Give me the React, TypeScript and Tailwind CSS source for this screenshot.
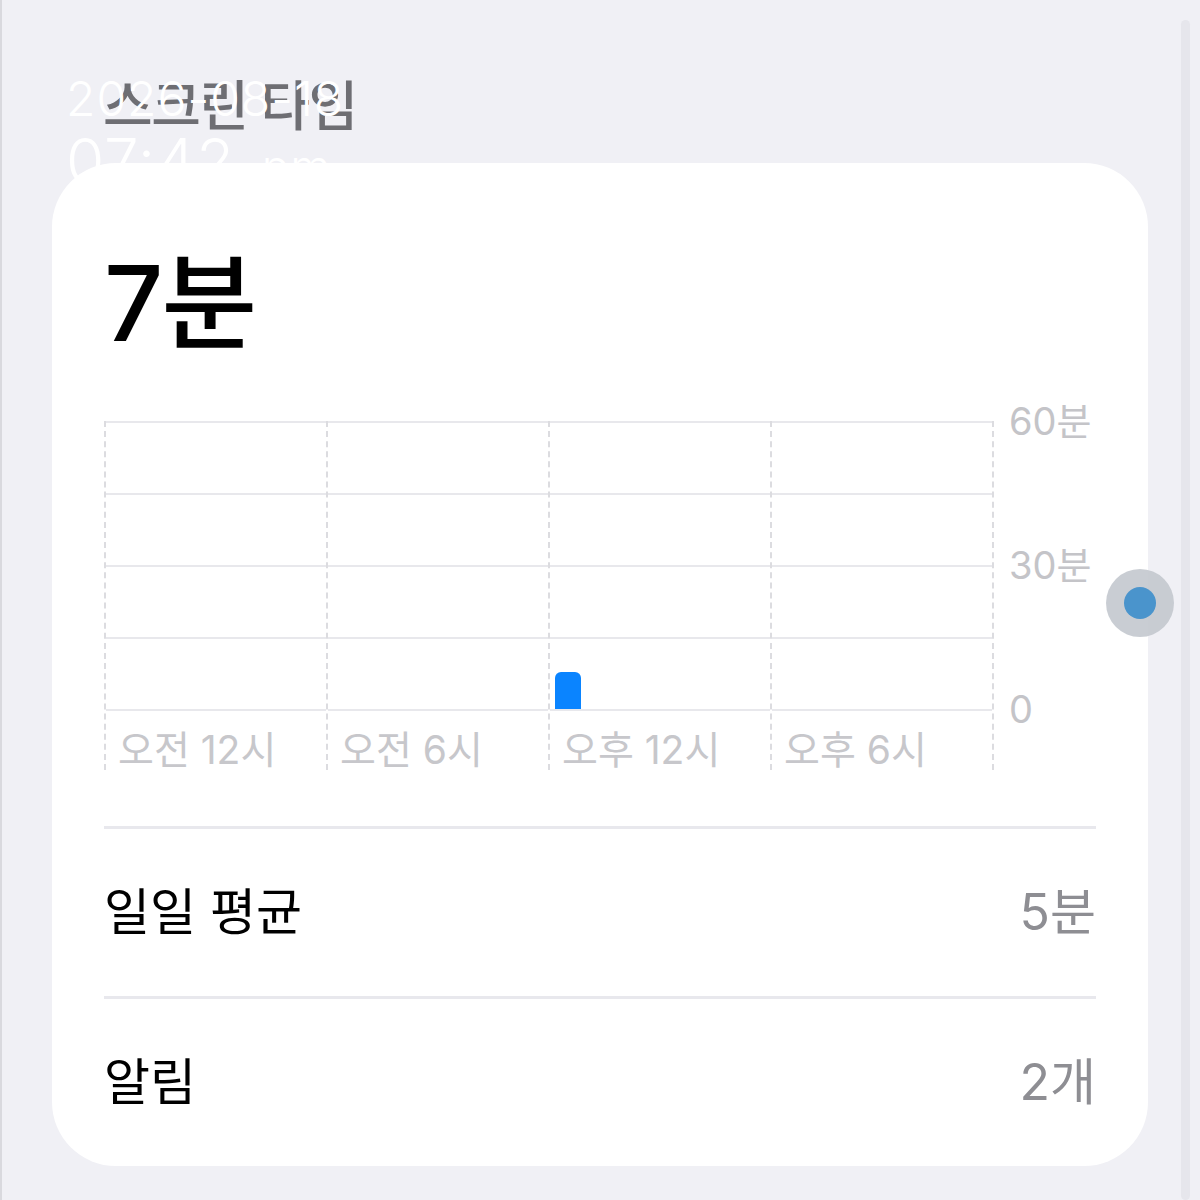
import React from "react";

const font = { fontFamily: 'Inter, "Noto Sans CJK KR", sans-serif' };

const columns = ["오전 12시", "오전 6시", "오후 12시", "오후 6시"];

function Chart() {
  return (
    <div className="flex">
      <div className="grid w-[890px] grid-cols-4 border-r-2 border-dashed border-[#dcdce0]">
        {columns.map((label, i) => (
          <div key={label} className="flex flex-col border-l-2 border-dashed border-[#dcdce0]">
            <div className="h-[72px] border-t-2 border-solid border-[#e8e8ec]" />
            <div className="h-[72px] border-t-2 border-solid border-[#e8e8ec]" />
            <div className="h-[72px] border-t-2 border-solid border-[#e8e8ec]" />
            <div className="flex h-[74px] items-end border-y-2 border-solid border-[#e8e8ec] pl-[5px]">
              {i === 2 && <div className="h-[37px] w-[26px] rounded-t-[6px] bg-[#0a84ff]" />}
            </div>
            <div className="h-[59px] pl-[12px] pt-[19px] text-[39px] leading-[40px] text-[#c7c7cb]">{label}</div>
          </div>
        ))}
      </div>
      <div className="-mt-[20px] ml-[15px] flex h-[328px] flex-col justify-between text-[38px] leading-[40px] text-[#c4c4c8]">
        <span>60분</span>
        <span>30분</span>
        <span>0</span>
      </div>
    </div>
  );
}

function Row({ label, value }: { label: string; value: string }) {
  return (
    <div className="flex h-[170px] items-center justify-between border-t-[3px] border-[#e8e8ed]">
      <span className="text-[50px] text-black">{label}</span>
      <span className="text-[50px] text-[#8e8e93]">{value}</span>
    </div>
  );
}

export default function App() {
  return (
    <div
      style={font}
      className="relative h-[1200px] w-[1200px] overflow-hidden border-l-2 border-[#d9d9de] bg-[#f0f0f5]"
    >
      <div className="flex h-[163px] items-start pl-[101px] pt-[68px]">
        <h1 className="text-[54px] font-medium leading-[78px] tracking-[-1.5px] text-[#6e6e73] blur-[0.6px]">
          스크린 타임
        </h1>
      </div>

      <div className="ml-[50px] w-[1096px] rounded-[64px] bg-white px-[52px] pt-[80px]">
        <div className="mb-[58px] text-[104px] font-medium leading-[120px] tracking-[-2px] text-black">7분</div>
        <Chart />
        <div className="mt-[56px]">
          <Row label="일일 평균" value="5분" />
          <Row label="알림" value="2개" />
        </div>
      </div>

      <div className="absolute left-[64px] top-[72px] text-white">
        <div className="text-[48px] font-light leading-[54px] tracking-[1px]">2026-08-18</div>
        <div className="mt-[2px] text-[62px] font-light leading-[66px] tracking-[1px]">
          07:42 <span className="ml-[8px] text-[46px]">pm</span>
        </div>
      </div>

      <div className="absolute right-[10px] top-[20px] h-[1180px] w-[9px] rounded-full bg-[#e6e6ec]" />

      <div className="absolute left-[1104px] top-[569px] flex h-[68px] w-[68px] items-center justify-center rounded-full bg-[#c3c8ce]/90">
        <div className="h-[32px] w-[32px] rounded-full bg-[#4a94cc]" />
      </div>
    </div>
  );
}
